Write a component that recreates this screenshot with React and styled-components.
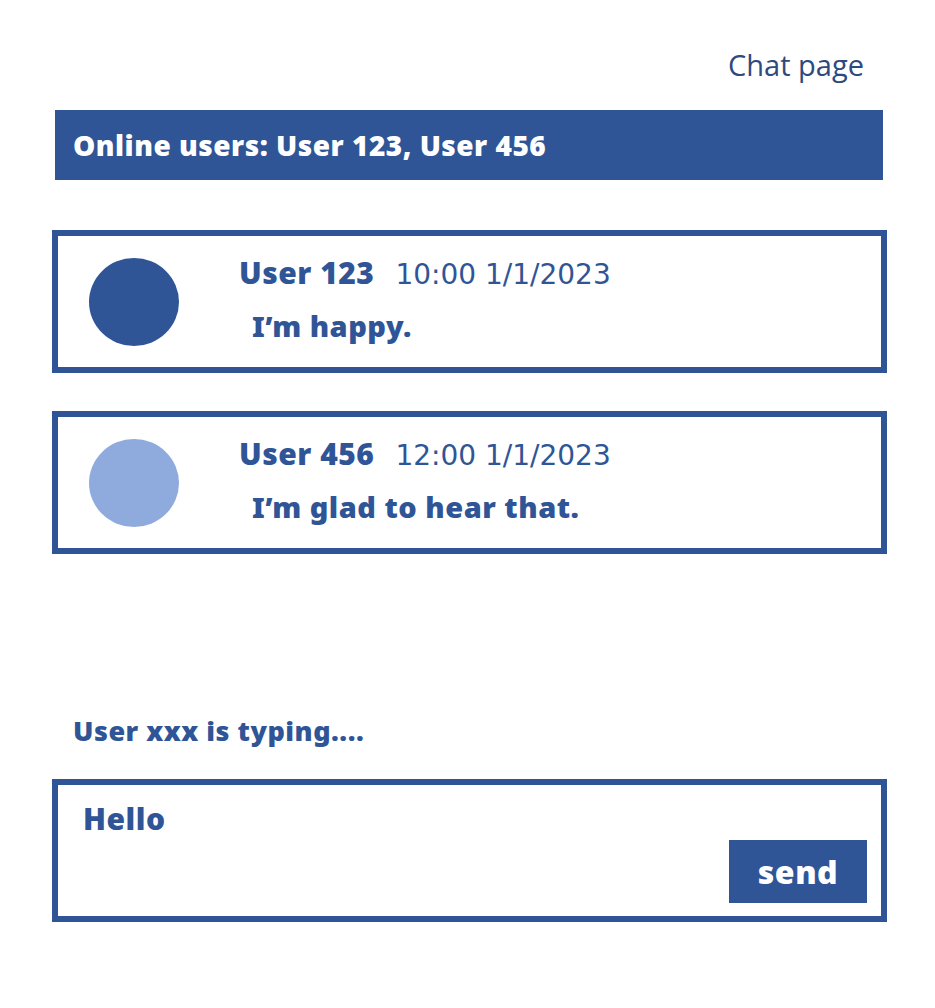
import React from 'react'
import styled, { createGlobalStyle } from 'styled-components'

const BLUE = '#2f5597'

const messages = [
  { id: 1, user: 'User 123', time: '10:00 1/1/2023', text: 'I’m happy.', color: BLUE },
  { id: 2, user: 'User 456', time: '12:00 1/1/2023', text: 'I’m glad to hear that.', color: '#8faadc' },
]

const App = () => {
  return (
    <Page>
      <GlobalStyle />
      <Header>Chat page</Header>
      <OnlineBar>Online users: User 123, User 456</OnlineBar>

      <MessageList>
        {messages.map((m) => (
          <MessageCard key={m.id}>
            <Avatar color={m.color} />
            <MessageBody>
              <MessageMeta>
                <UserName>{m.user}</UserName>
                <Time>{m.time}</Time>
              </MessageMeta>
              <MessageText>{m.text}</MessageText>
            </MessageBody>
          </MessageCard>
        ))}
      </MessageList>

      <Typing>User xxx is typing....</Typing>

      <Composer>
        <ComposerInput readOnly defaultValue="Hello" />
        <SendButton>send</SendButton>
      </Composer>
    </Page>
  )
}

export default App

const GlobalStyle = createGlobalStyle`
  body {
    margin: 0;
    background: #ffffff;
    font-family: 'Open Sans', 'Liberation Sans', sans-serif;
    color: ${BLUE};
  }
`

const heavy = `
  font-family: 'Noto Sans', 'Open Sans', sans-serif;
  font-weight: 900;
  letter-spacing: 0.5px;
`

const Page = styled.div`
  width: 935px;
  display: flex;
  flex-direction: column;
  padding-top: 45px;
`

const Header = styled.div`
  align-self: flex-end;
  margin-right: 71px;
  font-size: 29px;
  line-height: 40px;
  color: #2c4a80;
`

const OnlineBar = styled.div`
  margin: 25px 52px 0 55px;
  height: 70px;
  display: flex;
  align-items: center;
  padding-left: 18px;
  background: ${BLUE};
  color: #ffffff;
  font-size: 28px;
  ${heavy}
`

const MessageList = styled.div`
  display: flex;
  flex-direction: column;
  gap: 38px;
  margin: 50px 48px 0 52px;
`

const MessageCard = styled.div`
  height: 143px;
  box-sizing: border-box;
  border: 6px solid ${BLUE};
  display: flex;
  align-items: center;
  padding-left: 31px;
`

const Avatar = styled.div`
  width: 90px;
  height: 88px;
  border-radius: 50%;
  background: ${(p) => p.color};
  flex-shrink: 0;
`

const MessageBody = styled.div`
  display: flex;
  flex-direction: column;
  margin-left: 60px;
  margin-top: -8px;
`

const MessageMeta = styled.div`
  display: flex;
  align-items: baseline;
  gap: 21px;
`

const UserName = styled.span`
  font-size: 30px;
  line-height: 40px;
  ${heavy}
`

const Time = styled.span`
  font-family: 'DejaVu Sans', 'Open Sans', sans-serif;
  font-size: 28px;
  line-height: 40px;
`

const MessageText = styled.div`
  margin-top: 14px;
  padding-left: 13px;
  font-size: 29px;
  line-height: 34px;
  ${heavy}
`

const Typing = styled.div`
  margin: 160px 0 0 73px;
  font-size: 27px;
  line-height: 34px;
  ${heavy}
`

const Composer = styled.div`
  margin: 31px 48px 0 52px;
  height: 143px;
  box-sizing: border-box;
  border: 6px solid ${BLUE};
  display: flex;
  flex-direction: column;
  padding: 16px 14px 13px 25px;
`

const ComposerInput = styled.textarea`
  flex: 1;
  border: none;
  outline: none;
  resize: none;
  overflow: hidden;
  padding: 0;
  background: transparent;
  color: ${BLUE};
  font-size: 30px;
  line-height: 36px;
  ${heavy}
`

const SendButton = styled.button`
  align-self: flex-end;
  width: 138px;
  height: 63px;
  border: none;
  padding: 0;
  background: ${BLUE};
  color: #ffffff;
  font-size: 32px;
  ${heavy}
`
